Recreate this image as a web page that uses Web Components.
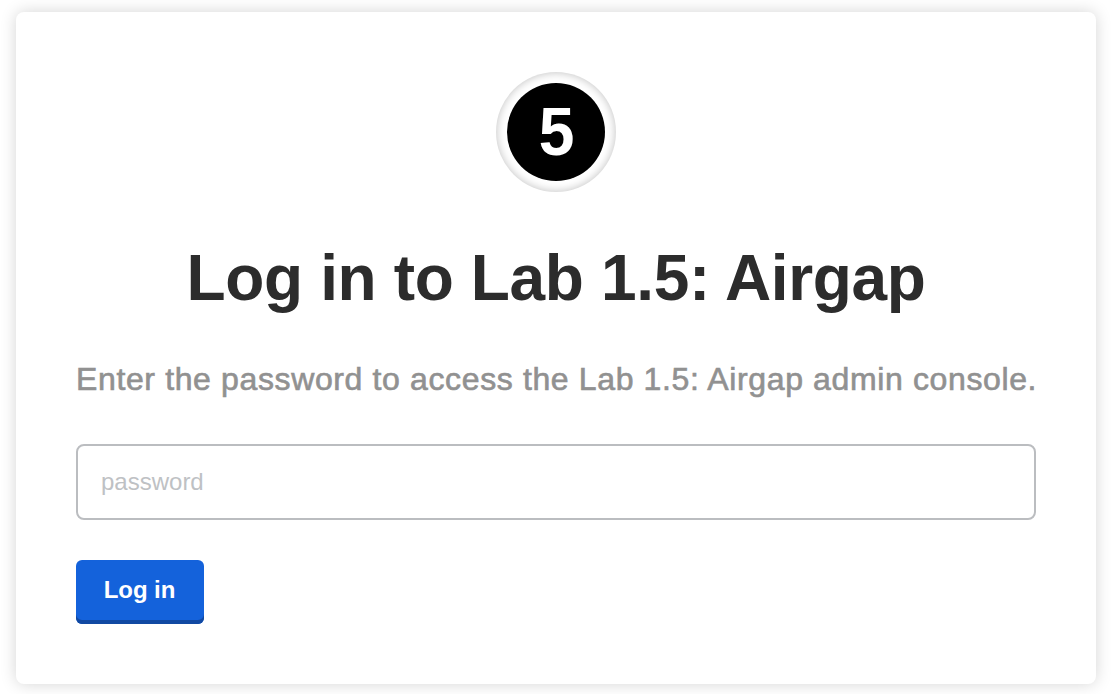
<!DOCTYPE html>
<html lang="en"><head><meta charset="utf-8"><title>Log in</title>
<style>html,body{margin:0;background:#fff;overflow:hidden}body{font-family:"Liberation Sans",Arial,sans-serif}</style></head>
<body>
<login-card>
<app-badge slot="icon">5</app-badge>
<span slot="title">Log in to Lab 1.5: Airgap</span>
<span slot="hint">Enter the password to access the Lab 1.5: Airgap admin console.</span>
<password-field></password-field>
<primary-button>Log in</primary-button>
</login-card>
<script>
const define = (name, html) => customElements.define(name, class extends HTMLElement {
  constructor(){ super(); this.attachShadow({mode:'open'}).innerHTML = html; }
});
define('login-card', `<style>
:host{display:flex;flex-direction:column;align-items:flex-start;box-sizing:border-box;width:1080px;height:672px;margin:12px 16px;padding:60px;background:#fff;border-radius:8px;box-shadow:0 0 16px rgba(0,0,0,.17)}
.icon{align-self:center}
h1{align-self:center;margin:50px 0 0;font-size:64px;line-height:72px;font-weight:700;letter-spacing:-.36px;color:#2c2c2c;white-space:nowrap}
p{margin:44px 0 0;font-size:32px;line-height:42px;letter-spacing:.63px;color:#919191;-webkit-text-stroke:.65px #919191;white-space:nowrap}
.form{display:flex;flex-direction:column;align-items:flex-start;gap:40px;width:100%;margin-top:44px}
</style><div class="icon"><slot name="icon"></slot></div><h1><slot name="title"></slot></h1><p><slot name="hint"></slot></p><div class="form"><slot></slot></div>`);
define('app-badge', `<style>
:host{display:grid;place-items:center;width:120px;height:120px;border-radius:50%;background:#fff;box-shadow:inset 0 0 10px rgba(0,0,0,.26)}
div{display:grid;place-items:center;width:98px;height:98px;border-radius:50%;background:#000}
span{display:block;font-size:69px;line-height:98px;font-weight:700;color:#fff;transform:translate(.5px,0) scaleX(.93)}
</style><div><span><slot></slot></span></div>`);
define('password-field', `<style>
:host{display:block;width:960px}
input{display:block;box-sizing:border-box;width:100%;height:76px;margin:0;padding:0 23px;border:2px solid #bbbdc0;border-radius:8px;background:#fff;font:24px "Liberation Sans",Arial,sans-serif;color:#323232;outline:none}
input::placeholder{color:#bec1c4;opacity:1}
</style><input type="password" placeholder="password" aria-label="password">`);
define('primary-button', `<style>
:host{display:block}
button{display:block;box-sizing:border-box;width:128px;height:64px;margin:0;padding:0 1px 4px 0;border:0;border-radius:6px;background:#1462db;box-shadow:inset 0 -4px #1149a2;color:#fff;font:700 24px "Liberation Sans",Arial,sans-serif;letter-spacing:-.05px;white-space:nowrap}
</style><button><slot></slot></button>`);
</script>
</body></html>
